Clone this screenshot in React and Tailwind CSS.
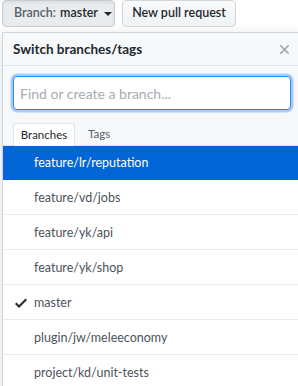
import React from 'react';

const branches = [
  'feature/lr/reputation',
  'feature/vd/jobs',
  'feature/yk/api',
  'feature/yk/shop',
  'master',
  'plugin/jw/meleeconomy',
  'project/kd/unit-tests',
];

function Check() {
  return (
    <svg width="12" height="16" viewBox="0 0 12 16" className="fill-current">
      <path d="M12 5l-8 8-4-4 1.5-1.5L4 10l6.5-6.5L12 5z" />
    </svg>
  );
}

export default function App() {
  const current = 'master';
  const selected = 'feature/lr/reputation';

  return (
    <div
      className="w-[298px] h-[386px] overflow-hidden bg-white text-[13.5px] text-[#24292e]"
      style={{ fontFamily: 'Lato, "Liberation Sans", sans-serif' }}
    >
      {/* top buttons */}
      <div className="flex gap-[7px] pl-[2px] h-[27px]">
        <button className="shrink-0 h-[27px] w-[113px] flex items-center pl-[11px] gap-[4px] rounded-[4px] border border-[#c9cdd1] bg-[#e9ecef] text-[12.5px] font-semibold whitespace-nowrap shadow-[inset_0_2px_3px_rgba(27,31,35,0.06)]">
          <span className="text-[#586069]">Branch:</span>
          <span>master</span>
          <span className="ml-[2px] w-0 h-0 border-x-[4px] border-x-transparent border-t-[4px] border-t-[#24292e]" />
        </button>
        <button className="shrink-0 h-[27px] w-[114px] flex items-center justify-center rounded-[4px] border border-[#d1d5da] bg-gradient-to-b from-[#fafbfc] to-[#eff3f6] text-[12.5px] font-semibold whitespace-nowrap">
          New pull request
        </button>
      </div>

      {/* dropdown */}
      <div className="mt-[5px] ml-[2px] w-[300px] border border-[#d1d5da] shadow-[0_3px_12px_rgba(27,31,35,0.15)]">
        <div className="h-[33px] flex items-center justify-between pl-[10px] pr-[11px] bg-[#f6f8fa] border-b border-[#e1e4e8]">
          <span className="font-bold">Switch branches/tags</span>
          <svg width="11" height="11" viewBox="0 0 12 12" className="stroke-[#a3aab1]">
            <path d="M1.5 1.5l9 9M10.5 1.5l-9 9" strokeWidth="1.7" />
          </svg>
        </div>
        <div className="bg-[#f6f8fa] px-[10px] pt-[10px]">
          <div className="h-[34px] rounded-[4px] border border-[#2188ff] bg-white shadow-[0_0_0_2.5px_rgba(3,102,214,0.3)] flex items-center pl-[6px] text-[14px] text-[#a6acb2]">
            Find or create a branch...
          </div>
          <div className="mt-[12px] flex items-end">
            <div className="h-[23px] w-[62px] -mb-px flex items-center justify-center bg-white border border-b-0 border-[#e1e4e8] rounded-t-[3px] text-[11.5px] text-[#24292e]">
              Branches
            </div>
            <div className="h-[23px] pl-[13px] flex items-center text-[11.5px] text-[#586069]">
              Tags
            </div>
          </div>
        </div>
        <div className="border-t border-[#e1e4e8]">
          {branches.map((b) => (
            <div
              key={b}
              className={
                'flex items-center border-b text-[12.5px] ' +
                (b === selected
                  ? 'bg-[#0366d6] text-white border-[#0366d6] h-[34px]'
                  : 'bg-white text-[#4b535d] border-[#eaecef] h-[35px]')
              }
            >
              <span className="w-[31px] flex justify-end pr-[7px] pt-[2px] text-[#24292e]">
                {b === current && <Check />}
              </span>
              <span className="pt-[2px]">{b}</span>
            </div>
          ))}
        </div>
      </div>
    </div>
  );
}
